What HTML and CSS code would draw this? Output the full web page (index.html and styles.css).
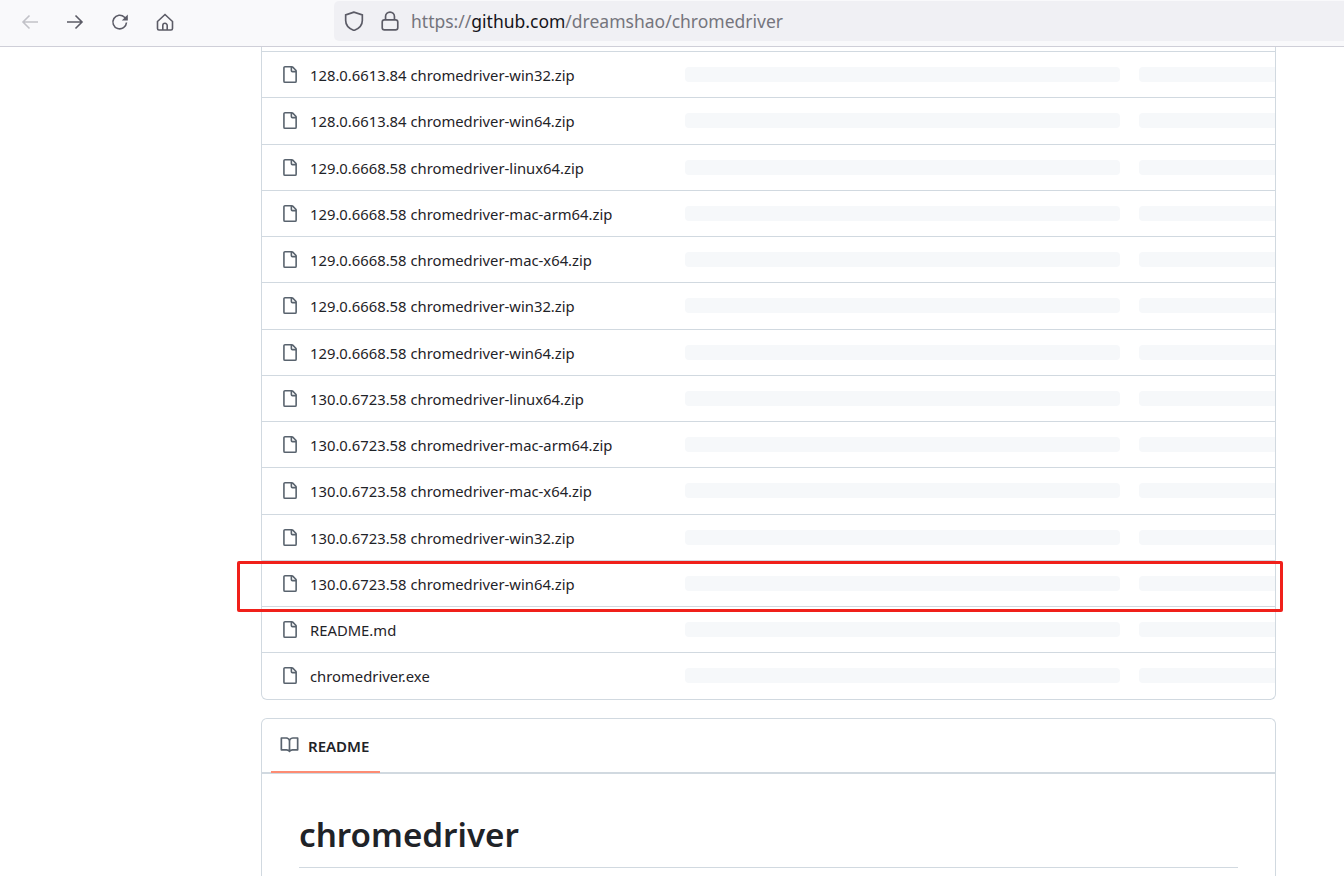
FILE: index.html
```html
<!DOCTYPE html>
<html lang="en">
<head>
  <meta charset="UTF-8" />
  <title>dreamshao/chromedriver</title>
  <link rel="stylesheet" href="styles.css">
</head>
<body>
  <svg class="defs" width="0" height="0">
    <symbol id="file" viewBox="0 0 16 16"><path d="M2 1.75C2 .784 2.784 0 3.75 0h6.586c.464 0 .909.184 1.237.513l2.914 2.914c.329.328.513.773.513 1.237v9.586A1.75 1.75 0 0 1 13.25 16h-9.5A1.75 1.75 0 0 1 2 14.25Zm1.75-.25a.25.25 0 0 0-.25.25v12.5c0 .138.112.25.25.25h9.5a.25.25 0 0 0 .25-.25V6h-2.75A1.75 1.75 0 0 1 9 4.25V1.5Zm6.75.062V4.25c0 .138.112.25.25.25h2.688l-.011-.013-2.914-2.914-.013-.011Z"/></symbol>
  </svg>

  <header class="toolbar">
    <div class="nav">
      <svg class="tool dim" viewBox="0 0 18 18"><path d="M17 9H2M8.500 2.500 2 9l6.500 6.500"/></svg>
      <svg class="tool" viewBox="0 0 18 18"><path d="M1 9h15M9.500 2.500 16 9l-6.500 6.500"/></svg>
      <svg class="tool" viewBox="0 0 18 18"><path d="M15.500 9.500a6.800 6.800 0 1 1-2-5.300L16 6.500"/><path class="solid" d="M16.800 1.500v6h-6z"/></svg>
      <svg class="tool" viewBox="0 0 18 18"><path d="M1.500 8.500 9 1.500l7.500 7v7a1.500 1.500 0 0 1-1.500 1.500H3a1.500 1.500 0 0 1-1.500-1.500z"/><path d="M6.800 17v-4.500a2.200 2.200 0 0 1 4.400 0V17"/></svg>
    </div>
    <div class="urlbar">
      <svg class="tool shield" viewBox="0 0 18 18"><path d="M9 1 1.500 3.500v5C1.500 13 5 16 9 17.500c4-1.500 7.500-4.500 7.500-9v-5z"/></svg>
      <svg class="tool lock" viewBox="0 0 18 18"><rect x="2" y="8" width="14" height="9" rx="2"/><path d="M5 8V5a4 4 0 0 1 8 0V8"/></svg>
      <span class="url">https://<b>github.com</b>/dreamshao/chromedriver</span>
    </div>
  </header>

  <main class="page">
    <section class="files">
      <div class="row"><svg class="icon"><use href="#file"/></svg><span class="name">128.0.6613.84 chromedriver-win32.zip</span><i class="bar wide"></i><i class="bar"></i></div>
      <div class="row"><svg class="icon"><use href="#file"/></svg><span class="name">128.0.6613.84 chromedriver-win64.zip</span><i class="bar wide"></i><i class="bar"></i></div>
      <div class="row"><svg class="icon"><use href="#file"/></svg><span class="name">129.0.6668.58 chromedriver-linux64.zip</span><i class="bar wide"></i><i class="bar"></i></div>
      <div class="row"><svg class="icon"><use href="#file"/></svg><span class="name">129.0.6668.58 chromedriver-mac-arm64.zip</span><i class="bar wide"></i><i class="bar"></i></div>
      <div class="row"><svg class="icon"><use href="#file"/></svg><span class="name">129.0.6668.58 chromedriver-mac-x64.zip</span><i class="bar wide"></i><i class="bar"></i></div>
      <div class="row"><svg class="icon"><use href="#file"/></svg><span class="name">129.0.6668.58 chromedriver-win32.zip</span><i class="bar wide"></i><i class="bar"></i></div>
      <div class="row"><svg class="icon"><use href="#file"/></svg><span class="name">129.0.6668.58 chromedriver-win64.zip</span><i class="bar wide"></i><i class="bar"></i></div>
      <div class="row"><svg class="icon"><use href="#file"/></svg><span class="name">130.0.6723.58 chromedriver-linux64.zip</span><i class="bar wide"></i><i class="bar"></i></div>
      <div class="row"><svg class="icon"><use href="#file"/></svg><span class="name">130.0.6723.58 chromedriver-mac-arm64.zip</span><i class="bar wide"></i><i class="bar"></i></div>
      <div class="row"><svg class="icon"><use href="#file"/></svg><span class="name">130.0.6723.58 chromedriver-mac-x64.zip</span><i class="bar wide"></i><i class="bar"></i></div>
      <div class="row"><svg class="icon"><use href="#file"/></svg><span class="name">130.0.6723.58 chromedriver-win32.zip</span><i class="bar wide"></i><i class="bar"></i></div>
      <div class="row"><svg class="icon"><use href="#file"/></svg><span class="name">130.0.6723.58 chromedriver-win64.zip</span><i class="bar wide"></i><i class="bar"></i></div>
      <div class="row"><svg class="icon"><use href="#file"/></svg><span class="name">README.md</span><i class="bar wide"></i><i class="bar"></i></div>
      <div class="row"><svg class="icon"><use href="#file"/></svg><span class="name">chromedriver.exe</span><i class="bar wide"></i><i class="bar"></i></div>
    </section>

    <section class="readme">
      <nav class="tabs">
        <div class="tab">
          <svg class="book" viewBox="0 0 16 16"><path d="M0 1.750A.75.75 0 0 1 .75 1h4.253c1.227 0 2.317.59 3 1.501A3.743 3.743 0 0 1 11.006 1h4.245a.75.75 0 0 1 .75.75v10.500a.75.75 0 0 1-.75.75h-4.507a2.250 2.250 0 0 0-1.591.659l-.622.621a.75.75 0 0 1-1.060 0l-.622-.621A2.250 2.250 0 0 0 5.258 13H.75a.75.75 0 0 1-.75-.75Zm7.251 10.324.004-5.073-.002-2.253A2.250 2.250 0 0 0 5.003 2.500H1.500v9h3.757a3.750 3.750 0 0 1 1.994.574ZM8.755 4.750l-.004 7.322a3.752 3.752 0 0 1 1.992-.572H14.500v-9h-3.495a2.250 2.250 0 0 0-2.250 2.250Z"/></svg>
          README
        </div>
      </nav>
      <article class="content">
        <h1>chromedriver</h1>
      </article>
    </section>
  </main>

  <div class="highlight"></div>
</body>
</html>
```

FILE: styles.css
```css
html, body {
  height: 876px;
  overflow: hidden;
}
body {
  margin: 0;
  background: #fff;
  color: #1f2328;
  font-family: 'Noto Sans', 'Open Sans', sans-serif;
  font-size: 14.8px;
}
.defs {
  position: absolute;
}

/* browser chrome */
.toolbar {
  display: flex;
  height: 46px;
  background: #f9f9fb;
  border-bottom: 1px solid #cfcfd8;
}
.nav {
  display: flex;
  align-items: center;
  gap: 27px;
  width: 313px;
  padding: 0 0 3px 21px;
}
.tool {
  width: 18px;
  height: 18px;
  flex: none;
  fill: none;
  stroke: #5b5b66;
  stroke-width: 1.6;
}
.tool.dim {
  stroke: #c2c2c8;
}
.tool .solid {
  fill: #5b5b66;
  stroke: none;
}
.urlbar {
  flex: 1;
  display: flex;
  align-items: center;
  height: 40px;
  margin-top: 1px;
  padding-left: 10px;
  background: #f0f0f4;
  border-radius: 5px 0 0 5px;
}
.urlbar .tool {
  width: 20px;
  height: 20px;
  stroke-width: 1.5;
}
.urlbar .lock {
  margin-left: 16px;
}
.url {
  margin-left: 11px;
  font-size: 17.5px;
  color: #75757d;
}
.url b {
  font-weight: 400;
  color: #15141a;
}

/* repo page */
.page {
  padding: 0 68px 0 261px;
}
.files {
  padding-top: 4px;
  border: 1px solid #d1d9e0;
  border-top: none;
  border-radius: 0 0 6px 6px;
}
.row {
  display: flex;
  align-items: center;
  height: 46.25px;
  box-sizing: border-box;
  padding-left: 19px;
  border-top: 1px solid #d1d9e0;
}
.icon {
  width: 17px;
  height: 17px;
  flex: none;
  fill: #59636e;
}
.name {
  width: 375px;
  margin-left: 12px;
  padding-top: 1px;
  white-space: nowrap;
}
.bar {
  height: 15px;
  margin-right: 19px;
  background: #f6f8fa;
  border-radius: 4px;
}
.bar.wide {
  width: 435px;
}
.bar:last-child {
  flex: 1;
  margin-right: 0;
  border-radius: 4px 0 0 4px;
}

/* readme box */
.readme {
  margin-top: 18px;
  border: 1px solid #d1d9e0;
  border-bottom: none;
  border-radius: 6px 6px 0 0;
  height: 200px;
}
.tabs {
  height: 54px;
  padding: 0 10px 0 9px;
  box-shadow: inset 0 -1px 0 #d1d9e0;
  border-bottom: 1px solid #d1d9e0;
}
.tab {
  display: flex;
  align-items: center;
  gap: 9px;
  width: 109px;
  height: 54px;
  box-sizing: border-box;
  padding: 2px 0 0 9px;
  border-bottom: 2px solid #fd8c73;
  font-size: 15px;
  font-weight: 600;
}
.book {
  width: 19px;
  height: 18px;
  margin-top: -2px;
  fill: #59636e;
}
.content {
  padding: 38px 37px 0;
}
h1 {
  margin: 0;
  padding-bottom: 10px;
  border-bottom: 1px solid #d1d9e0;
  font-size: 33.2px;
  font-weight: 600;
  line-height: 45px;
}

/* red box drawn over the screenshot */
.highlight {
  position: absolute;
  left: 237px;
  top: 561px;
  width: 1040px;
  height: 45px;
  border: 3px solid #f0201a;
  border-radius: 2px;
}
```
